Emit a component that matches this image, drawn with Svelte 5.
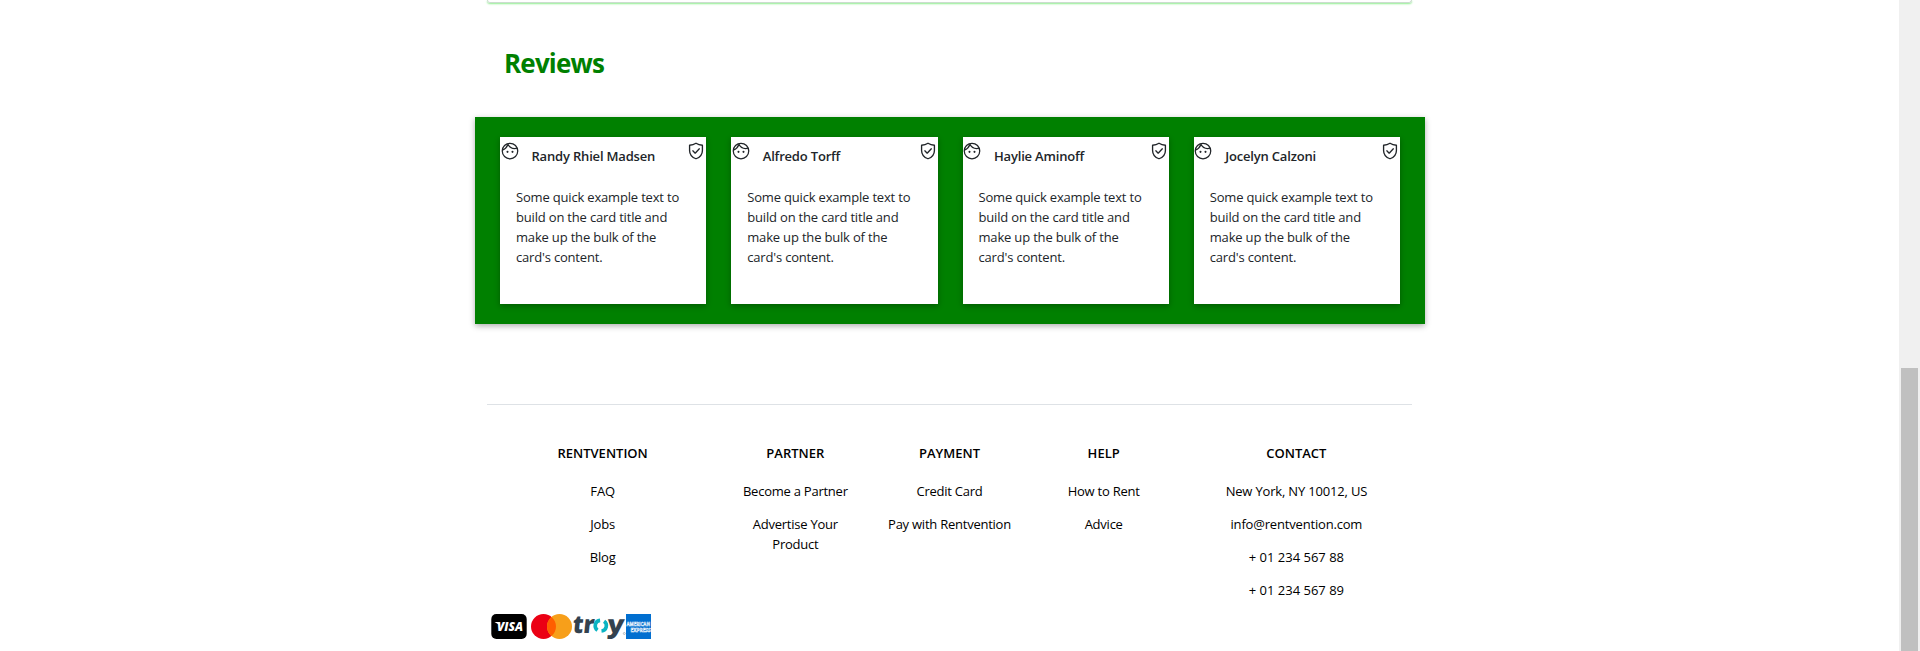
<script>
  const reviewers = ['Randy Rhiel Madsen', 'Alfredo Torff', 'Haylie Aminoff', 'Jocelyn Calzoni'];
  const columns = [
    { title: 'RENTVENTION', wide: true, links: ['FAQ', 'Jobs', 'Blog'] },
    { title: 'PARTNER', links: ['Become a Partner', 'Advertise Your Product'] },
    { title: 'PAYMENT', links: ['Credit Card', 'Pay with Rentvention'] },
    { title: 'HELP', links: ['How to Rent', 'Advice'] },
    { title: 'CONTACT', wide: true, links: ['New York, NY 10012, US', 'info@rentvention.com', '+ 01 234 567 88', '+ 01 234 567 89'] }
  ];
</script>

<div class="page">
  <main>
    <div class="panel-end"></div>
    <h2>Reviews</h2>
    <section class="reviews">
      {#each reviewers as name}
        <article class="card">
          <header>
            <svg class="icon" viewBox="0 0 24 24"><path fill="currentColor" d="M10.25 13a1.25 1.25 0 1 1-2.5 0 1.25 1.25 0 0 1 2.5 0zM15 11.75a1.25 1.25 0 1 0 0 2.5 1.25 1.25 0 0 0 0-2.5z" /><g fill="none" stroke="currentColor" stroke-width="1.5"><circle cx="12" cy="12" r="9.3" /><path d="M9.300 3.600C11 7.200 14.300 9 17.500 9c1 0 2-.1 2.900-.4M2.900 10.900C6 9.700 8.300 7.300 9.300 4.500" /></g></svg>
            <h3>{name}</h3>
            <svg class="icon" viewBox="0 0 24 24" fill="none" stroke="currentColor" stroke-width="1.6" stroke-linejoin="round" stroke-linecap="round"><path d="M12 2.700C9.600 4.200 7 4.900 4.300 5.100v6.200c0 4.900 3.400 8.400 7.700 10 4.300-1.600 7.700-5.100 7.700-10V5.100C17 4.900 14.400 4.200 12 2.700z" /><path d="M8.200 11.800l2.800 2.800 5-5.200" /></svg>
          </header>
          <p>Some quick example text to build on the card title and make up the bulk of the card's content.</p>
        </article>
      {/each}
    </section>

    <footer>
      <div class="columns">
        {#each columns as col}
          <div class="column" class:wide={col.wide}>
            <h4>{col.title}</h4>
            {#each col.links as link}<p class:phone={link.startsWith('+')}>{link}</p>{/each}
          </div>
        {/each}
      </div>
      <div class="payments">
        <svg class="visa" width="36" height="25" viewBox="0 0 36 25"><rect x=".3" width="35.400" height="25" rx="5" /><text x="6" y="17" font-size="12.500" textLength="26" lengthAdjust="spacingAndGlyphs" fill="#fff">VISA</text><path d="M3.500 7.900h4.500l1.500 3.500z" fill="#fff" /></svg>
        <svg class="mc" width="41" height="25" viewBox="0 0 41 25"><circle cx="12.500" cy="12.500" r="12.500" fill="#eb0014" /><circle cx="28.500" cy="12.500" r="12.500" fill="#f79f1a" /><path d="M20.500 2.900a12.500 12.500 0 0 1 0 19.200 12.500 12.500 0 0 1 0-19.200z" fill="#ff5f00" /></svg>
        <svg class="troy" width="54" height="25" viewBox="0 0 54 25"><g transform="translate(0 18.600) skewX(-6)"><text x="0" y="0" font-size="25" textLength="21.500" lengthAdjust="spacingAndGlyphs">tr</text><text x="34.500" y="0" font-size="25" textLength="17" lengthAdjust="spacingAndGlyphs">y</text></g><g fill="none" stroke="#0ab4c2" stroke-width="3.600"><path d="M28.100 6.400a5.400 5.400 0 0 0-2.600 9.800" /><path d="M29.500 17a5.400 5.400 0 0 0 2.600-9.800" /></g><circle cx="52.300" cy="19.500" r="1" fill="none" stroke="#8d969c" stroke-width=".6" /></svg>
        <svg class="amex" width="25" height="25" viewBox="0 0 25 25"><rect width="25" height="25" fill="#016fd0" /><text x=".5" y="12.400" font-size="5.600" textLength="23.500" lengthAdjust="spacingAndGlyphs">AMERICAN</text><text x="4.500" y="17.600" font-size="5.600" textLength="20.200" lengthAdjust="spacingAndGlyphs">EXPRESS</text></svg>
      </div>
    </footer>
  </main>
  <div class="scrollbar"><div class="thumb"></div></div>
</div>

<style>
  :global(body) { overflow: hidden; background: #fff; }
  .page { display: flex; box-sizing: border-box; padding-right: 20px; height: 651px; overflow: hidden; font: 13px/20px "Open Sans", "Noto Sans", sans-serif; letter-spacing: -.18px; color: #212529; }
  h2, h3, h4, p { margin: 0; }
  main { width: 950px; margin: 0 auto; flex: none; }
  .panel-end { box-sizing: border-box; height: 3px; margin: 0 13px 0 12px; border: 1px solid #ccdccf; border-top: 0; border-radius: 0 0 4px 4px; box-shadow: 0 1px 2px #90ee90; }
  h2 { padding: 43px 0 0 29px; height: 71px; font-size: 26px; line-height: 34px; font-weight: 700; letter-spacing: -.82px; color: green; }
  .reviews { box-sizing: border-box; height: 207px; padding: 20px 25px; display: grid; grid-template-columns: repeat(4, 1fr); gap: 25px; background: green; box-shadow: 0 2px 6px rgba(0, 0, 0, .32); }
  .card { background: #fff; box-shadow: 0 2px 6px rgba(0, 0, 0, .3); }
  header { display: flex; padding-top: 4px; height: 46px; }
  .icon { width: 20px; height: 20px; flex: none; margin-left: -.5px; }
  h3 { flex: 1; padding: 5px 0 0 12px; font-size: 13px; font-weight: 600; letter-spacing: -.18px; white-space: nowrap; }
  .card p { padding: 0 16px; }
  footer { margin: 80px 13px 0 12px; border-top: 1px solid #dee2e6; color: #000; }
  .columns { display: grid; grid-template-columns: 3fr 2fr 2fr 2fr 3fr; height: 209px; padding-top: 38px; box-sizing: border-box; text-align: center; }
  .column { padding: 0 13px; }
  h4 { margin-bottom: 18px; font-size: 13px; font-weight: 600; letter-spacing: 0; }
  .column p { margin-bottom: 13px; }
  .column:not(.wide) p { letter-spacing: -.24px; }
  .column p.phone { letter-spacing: 0; }
  .payments { display: flex; padding-left: 4px; }
  .payments svg { display: block; flex: none; overflow: visible; }
  .payments text { letter-spacing: 0; font-weight: 700; }
  .visa text { font-style: italic; font-weight: 800; }
  .mc { margin-left: 4px; }
  .troy text { font-weight: 800; fill: #33424f; }
  .amex text { fill: none; stroke: #fff; stroke-width: .5; }
  .scrollbar { position: absolute; top: 0; right: 0; box-sizing: border-box; width: 21px; height: 651px; padding: 368px 2px 0; background: #f0f0f0; }
  .thumb { width: 17px; height: 283px; background: #c0c0c0; }
</style>
